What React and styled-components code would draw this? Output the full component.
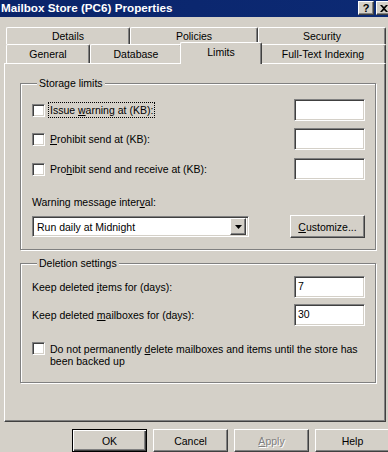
import React from 'react';
import styled, { createGlobalStyle, css } from 'styled-components';

const face = '#d4d0c8';

const GlobalStyle = createGlobalStyle`
  html, body {
    margin: 0;
    padding: 0;
    background: ${face};
    overflow: hidden;
  }
  body {
    font-family: "Liberation Sans", Arial, sans-serif;
    font-size: 10.5px;
    color: #000;
  }
  * { box-sizing: border-box; }
`;

const raised = css`
  border: 1px solid;
  border-color: #fff #404040 #404040 #fff;
  box-shadow: inset -1px -1px 0 #808080;
`;

const sunken = css`
  border: 1px solid;
  border-color: #808080 #fff #fff #808080;
  box-shadow: inset 1px 1px 0 #404040, inset -1px -1px 0 ${face};
`;

const Window = styled.div`
  width: 388px;
  height: 452px;
  display: flex;
  flex-direction: column;
  background: ${face};
  overflow: hidden;
`;

const TitleBar = styled.div`
  height: 17px;
  flex: none;
  display: flex;
  align-items: flex-start;
  justify-content: space-between;
  padding-left: 1px;
  background: linear-gradient(90deg, #0a246a, #0c2a74);
`;

const Title = styled.div`
  color: #fff;
  font-weight: bold;
  font-size: 11.7px;
  line-height: 16px;
  white-space: nowrap;
`;

const CaptionButtons = styled.div`
  display: flex;
  gap: 2px;
  margin: 1px -4px 0 0;
`;

const CaptionButton = styled.div`
  ${raised};
  width: 16px;
  height: 14px;
  background: ${face};
  display: flex;
  align-items: center;
  justify-content: center;
  font-weight: bold;
  font-size: 11px;
  line-height: 1;
`;

const Content = styled.div`
  padding: 10px 0 0 4px;
  display: flex;
  flex-direction: column;
`;

const TabRow = styled.div`
  display: flex;
  height: ${p => p.$h}px;
  align-items: flex-end;
  padding-left: 2px;
`;

const Tab = styled.div`
  flex: none;
  width: ${p => p.$w}px;
  height: ${p => p.$h}px;
  background: ${face};
  border-top: 1px solid #fff;
  border-left: 1px solid #fff;
  border-right: 1px solid #404040;
  box-shadow: inset -1px 0 0 #808080;
  border-radius: 2px 2px 0 0;
  display: flex;
  align-items: center;
  justify-content: center;
  white-space: nowrap;
  ${p => p.$active && css`
    width: ${p.$w + 4}px;
    height: ${p.$h + 3}px;
    margin: 0 -2px -1px;
    padding-bottom: 3px;
    position: relative;
    z-index: 1;
  `}
`;

const Panel = styled.div`
  width: 382px;
  height: 359px;
  border: 1px solid;
  border-color: #fff #404040 #404040 #fff;
  box-shadow: inset -1px -1px 0 #808080;
  padding: 13px 0 0 15px;
  display: flex;
  flex-direction: column;
  gap: 7px;
`;

const Group = styled.fieldset`
  width: 356px;
  margin: 0;
  min-inline-size: 0;
  border: 1px solid #808080;
  box-shadow: 1px 1px 0 #fff, inset 1px 1px 0 #fff;
  padding: ${p => p.$pt}px 10px ${p => p.$pb}px 11px;
  display: flex;
  flex-direction: column;
`;

const Legend = styled.legend`
  margin-left: 5px;
  padding: 0 2px;
  line-height: 13px;
  background: ${face};
`;

const Row = styled.div`
  display: flex;
  align-items: center;
  justify-content: space-between;
  height: ${p => p.$h || 22}px;
  margin-top: ${p => p.$mt || 0}px;
`;

const Check = styled.label`
  display: flex;
  align-items: ${p => (p.$top ? 'flex-start' : 'center')};
  gap: 4px;
  margin-top: ${p => p.$mt || 0}px;
`;

const Box = styled.span`
  ${sunken};
  flex: none;
  width: 13px;
  height: 13px;
  background: #fff;
`;

const CheckText = styled.span`
  padding: 1px 1px;
  line-height: 12px;
  outline: ${p => (p.$focus ? '1px dotted #000' : 'none')};
  outline-offset: 0;
`;

const TextBox = styled.div`
  ${sunken};
  flex: none;
  width: 71px;
  height: 22px;
  background: #fff;
  padding: 2px 0 0 3px;
  line-height: 14px;
`;

const Caption = styled.div`
  line-height: 13px;
  margin-top: ${p => p.$mt || 0}px;
`;

const Combo = styled.div`
  ${sunken};
  width: 217px;
  height: 21px;
  background: #fff;
  display: flex;
  align-items: center;
  justify-content: space-between;
  padding: 2px 2px 2px 4px;
`;

const ComboArrow = styled.div`
  ${raised};
  width: 16px;
  height: 17px;
  background: ${face};
  display: flex;
  align-items: center;
  justify-content: center;
`;

const Button = styled.div`
  ${raised};
  flex: none;
  width: 75px;
  height: 23px;
  background: ${face};
  display: flex;
  align-items: center;
  justify-content: center;
  color: ${p => (p.$disabled ? '#808080' : '#000')};
  text-shadow: ${p => (p.$disabled ? '1px 1px 0 #fff' : 'none')};
  ${p => p.$default && css`
    border: 1px solid #000;
    box-shadow: inset 1px 1px 0 #fff, inset -1px -1px 0 #404040, inset -2px -2px 0 #808080;
  `}
`;

const ButtonBar = styled.div`
  display: flex;
  gap: 6px;
  padding: 7px 0 0 68px;
`;

const CloseGlyph = () => (
  <svg width="8" height="7" viewBox="0 0 8 7">
    <path d="M0 0h2l2 2 2-2h2L5 3.5 8 7H6L4 5 2 7H0l3-3.5z" fill="#000" />
  </svg>
);

const DownArrow = () => (
  <svg width="7" height="4" viewBox="0 0 7 4">
    <path d="M0 0h7L3.5 4z" fill="#000" />
  </svg>
);

const backTabs = [
  { label: 'Details', w: 124 },
  { label: 'Policies', w: 128 },
  { label: 'Security', w: 128 },
];

const frontTabs = [
  { label: 'General', w: 84 },
  { label: 'Database', w: 92 },
  { label: 'Limits', w: 78, active: true },
  { label: 'Full-Text Indexing', w: 126 },
];

const LimitRow = ({ children, focus, mt }) => (
  <Row $mt={mt}>
    <Check>
      <Box />
      <CheckText $focus={focus}>{children}</CheckText>
    </Check>
    <TextBox />
  </Row>
);

export default function App() {
  return (
    <Window>
      <GlobalStyle />
      <TitleBar>
        <Title>Mailbox Store (PC6) Properties</Title>
        <CaptionButtons>
          <CaptionButton>?</CaptionButton>
          <CaptionButton>
            <CloseGlyph />
          </CaptionButton>
        </CaptionButtons>
      </TitleBar>

      <Content>
        <TabRow $h={17}>
          {backTabs.map(t => (
            <Tab key={t.label} $w={t.w} $h={17}>{t.label}</Tab>
          ))}
        </TabRow>
        <TabRow $h={19}>
          {frontTabs.map(t => (
            <Tab key={t.label} $w={t.w} $h={19} $active={t.active}>{t.label}</Tab>
          ))}
        </TabRow>

        <Panel>
          <Group $pt={9} $pb={11}>
            <Legend>Storage limits</Legend>
            <LimitRow focus>Issue <u>w</u>arning at (KB):</LimitRow>
            <LimitRow mt={7}><u>P</u>rohibit send at (KB):</LimitRow>
            <LimitRow mt={8}>Pro<u>h</u>ibit send and receive at (KB):</LimitRow>
            <Caption $mt={16}>Warning message inter<u>v</u>al:</Caption>
            <Row $mt={6} $h={23}>
              <Combo>
                <span>Run daily at Midnight</span>
                <ComboArrow>
                  <DownArrow />
                </ComboArrow>
              </Combo>
              <Button><span><u>C</u>ustomize...</span></Button>
            </Row>
          </Group>

          <Group $pt={6} $pb={14}>
            <Legend>Deletion settings</Legend>
            <Row>
              <span>Keep deleted <u>i</u>tems for (days):</span>
              <TextBox>7</TextBox>
            </Row>
            <Row $mt={6}>
              <span>Keep deleted <u>m</u>ailboxes for (days):</span>
              <TextBox>30</TextBox>
            </Row>
            <Check $top $mt={16}>
              <Box />
              <CheckText>
                Do not permanently <u>d</u>elete mailboxes and items until the store has
                <br />
                been backed up
              </CheckText>
            </Check>
          </Group>
        </Panel>

        <ButtonBar>
          <Button $default>OK</Button>
          <Button>Cancel</Button>
          <Button $disabled><span><u>A</u>pply</span></Button>
          <Button>Help</Button>
        </ButtonBar>
      </Content>
    </Window>
  );
}
